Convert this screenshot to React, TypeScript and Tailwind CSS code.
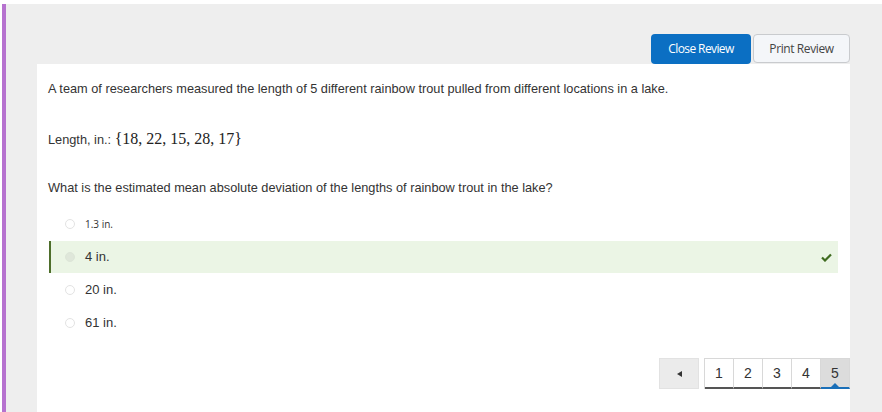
import React from "react";

const options = [
  { label: "1.3 in.", small: true, correct: false, h: 34 },
  { label: "4 in.", small: false, correct: true, h: 32 },
  { label: "20 in.", small: false, correct: false, h: 33 },
  { label: "61 in.", small: false, correct: false, h: 34 },
];

function Radio({ filled }: { filled?: boolean }) {
  return (
    <span
      className={
        "inline-block w-[10px] h-[10px] rounded-full border " +
        (filled ? "border-[#dde6d8] bg-[#dfe7da]" : "border-[#e3e3e3] bg-white")
      }
    />
  );
}

export default function App() {
  return (
    <div className="w-[882px] h-[412px] bg-white pt-[4px] pl-[2px] flex overflow-hidden" style={{ fontFamily: "Arial, 'Liberation Sans', sans-serif" }}>
      <div className="w-[4px] bg-[#b672cf] shrink-0" />
      <div className="flex-1 bg-[#eeeeee] pl-[31px] pr-[32px] pt-[30px] flex flex-col">
        <div className="flex justify-end gap-[2px] h-[30px]">
          <button className="w-[100px] h-[30px] rounded-[4px] bg-[#0b6fc3] text-white text-[12px] tracking-[-0.6px]" style={{ fontFamily: "'Open Sans', sans-serif" }}>
            Close Review
          </button>
          <button className="w-[97px] h-[29px] rounded-[4px] border border-[#c9cbce] bg-[#f4f6f9] text-[#444] text-[12px] tracking-[-0.4px]" style={{ fontFamily: "'Open Sans', sans-serif" }}>
            Print Review
          </button>
        </div>
        <div className="flex-1 bg-white pl-[11px] pr-[12px] pt-[16px] text-[#333] text-[12.75px]" style={{ fontFamily: "'Liberation Sans', Arial, sans-serif" }}>
          <p className="h-[18px] leading-[18px]">A team of researchers measured the length of 5 different rainbow trout pulled from different locations in a lake.</p>
          <p className="mt-[31px] h-[20px] leading-[20px] flex items-baseline">
            <span>Length, in.:&nbsp;</span>
            <span className="text-[16px] text-[#222]" style={{ fontFamily: "'Liberation Serif', 'Times New Roman', serif" }}>
              {"{18, 22, 15, 28, 17}"}
            </span>
          </p>
          <p className="mt-[30px] h-[18px] leading-[18px]">What is the estimated mean absolute deviation of the lengths of rainbow trout in the lake?</p>
          <div className="mt-[10px] flex flex-col">
            {options.map((o, i) => (
              <div
                key={i}
                className={
                  "flex items-center " +
                  (o.correct ? "bg-[#ebf5e5] border-l-2 border-[#4e6e2b] ml-[1px] pl-[14px]" : "pl-[17px]")
                }
                style={{ height: o.h }}
              >
                <Radio filled={o.correct} />
                <span
                  className={"ml-[10px] text-[#333] " + (o.small ? "text-[10px]" : "text-[13px]")}
                  style={o.small ? { fontFamily: "'Open Sans', sans-serif" } : undefined}
                >
                  {o.label}
                </span>
                {o.correct && (
                  <svg className="ml-auto mr-[6px]" width="11" height="9" viewBox="0 0 11 9">
                    <path d="M1 4.5 L4 7.5 L10 1.5" stroke="#3f6b20" strokeWidth="2.2" fill="none" />
                  </svg>
                )}
              </div>
            ))}
          </div>
          <div className="mt-[18px] flex justify-end items-start">
            <div className="w-[40px] h-[31px] bg-[#ebebeb] border border-[#e2e2e2] flex items-center justify-center">
              <svg width="5" height="6" viewBox="0 0 5 6"><path d="M5 0 L0 3 L5 6 Z" fill="#333" /></svg>
            </div>
            <div className="ml-[5px] flex border-t border-l border-[#d8d8d8] -mr-[12px]">
              {[1, 2, 3, 4, 5].map((n) => (
                <div
                  key={n}
                  className={
                    "relative w-[29px] h-[30px] flex items-center justify-center text-[14px] text-[#333] border-r border-[#d8d8d8] " +
                    (n === 5 ? "bg-[#dcdcdc] border-b-[2px] border-b-[#1a6fb8]" : "bg-white border-b-[2px] border-b-[#555]")
                  }
                >
                  {n}
                  {n === 5 && (
                    <span className="absolute bottom-0 left-1/2 -translate-x-1/2 w-0 h-0 border-l-[4px] border-r-[4px] border-b-[4px] border-l-transparent border-r-transparent border-b-[#1a6fb8]" />
                  )}
                </div>
              ))}
            </div>
          </div>
        </div>
      </div>
    </div>
  );
}
